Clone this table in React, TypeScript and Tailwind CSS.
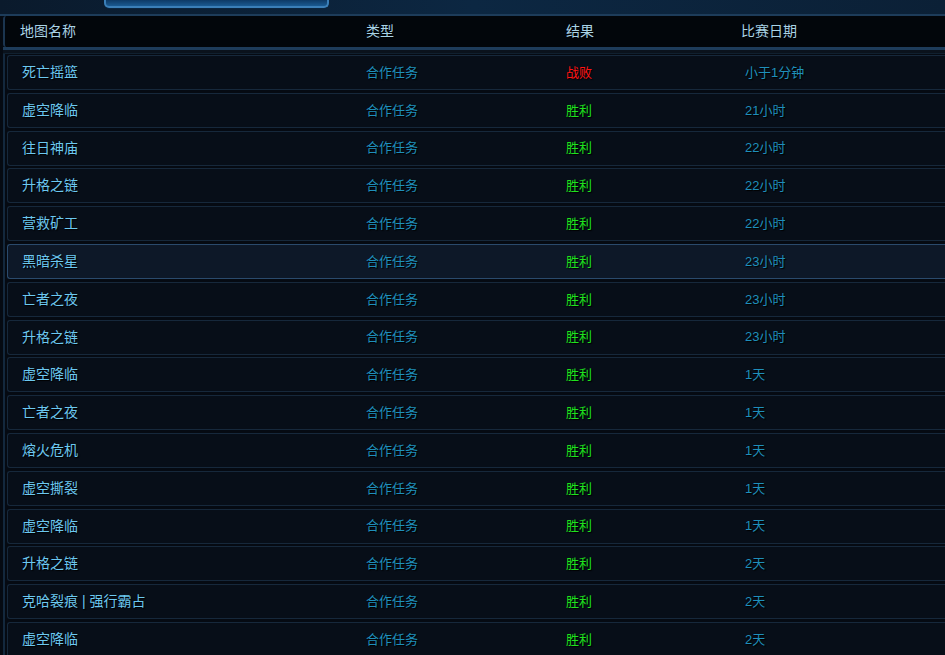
const rows: { map: string; win: boolean; date: string; active?: boolean }[] = [
  { map: '死亡摇篮', win: false, date: '小于1分钟' },
  { map: '虚空降临', win: true, date: '21小时' },
  { map: '往日神庙', win: true, date: '22小时' },
  { map: '升格之链', win: true, date: '22小时' },
  { map: '营救矿工', win: true, date: '22小时' },
  { map: '黑暗杀星', win: true, date: '23小时', active: true },
  { map: '亡者之夜', win: true, date: '23小时' },
  { map: '升格之链', win: true, date: '23小时' },
  { map: '虚空降临', win: true, date: '1天' },
  { map: '亡者之夜', win: true, date: '1天' },
  { map: '熔火危机', win: true, date: '1天' },
  { map: '虚空撕裂', win: true, date: '1天' },
  { map: '虚空降临', win: true, date: '1天' },
  { map: '升格之链', win: true, date: '2天' },
  { map: '克哈裂痕 | 强行霸占', win: true, date: '2天' },
  { map: '虚空降临', win: true, date: '2天' },
];

const font = { fontFamily: '"Liberation Sans", "Noto Sans CJK SC", sans-serif' };

export default function App() {
  return (
    <div
      className="w-[945px] h-[655px] overflow-hidden bg-[#050a12] flex flex-col [text-shadow:1px_1px_1px_#000]"
      style={font}
    >
      {/* top strip with tab */}
      <div className="h-[16px] shrink-0 bg-gradient-to-r from-[#0a1a2c] via-[#0c2742] to-[#0b2036] border-b-2 border-[#1d3c5a] pl-[104px]">
        <div className="w-[225px] h-[8px] rounded-b-[5px] border-2 border-t-0 border-[#3b7fb8] bg-gradient-to-b from-[#0e3a66] to-[#1a5a92] shadow-[0_1px_0_#0a2540]" />
      </div>

      <div className="flex-1 flex flex-col pl-[3px]">
        {/* header */}
        <div className="h-[31px] shrink-0 flex items-center bg-[#02060b] border-l-2 border-[#1b3550] rounded-l-[3px] text-[14px] text-[#a9d3e6]">
          <span className="w-[361px] pl-[15px]">地图名称</span>
          <span className="w-[200px]">类型</span>
          <span className="w-[175px]">结果</span>
          <span>比赛日期</span>
        </div>
        <div className="h-[7px] shrink-0 bg-[#0a121c] border-t-[3px] border-[#1e3c5b] border-b border-b-[#10202f]" />

        {/* rows */}
        <div className="flex flex-col gap-[2.8px] pl-[2px] border-l-2 border-[#13283d] pt-[1px]">
          {rows.map((r, i) => (
            <div
              key={i}
              className={
                r.active
                  ? 'h-[35px] shrink-0 flex items-center rounded-l-[3px] border border-r-0 border-[#2a4a6c] bg-[#0d1828]'
                  : 'h-[35px] shrink-0 flex items-center rounded-l-[3px] border border-r-0 border-[#16283b] bg-[#070e18]'
              }
            >
              <span className="w-[358px] pl-[14px] text-[14px] text-[#6cc8f0]">{r.map}</span>
              <span className="w-[200px] text-[13px] text-[#1f8fbb]">合作任务</span>
              <span
                className={
                  r.win
                    ? 'w-[179px] text-[13px] text-[#1fe11f]'
                    : 'w-[179px] text-[13px] text-[#ff1414]'
                }
              >
                {r.win ? '胜利' : '战败'}
              </span>
              <span className="text-[13px] text-[#1f8fbb]">{r.date}</span>
            </div>
          ))}
        </div>
      </div>
    </div>
  );
}
